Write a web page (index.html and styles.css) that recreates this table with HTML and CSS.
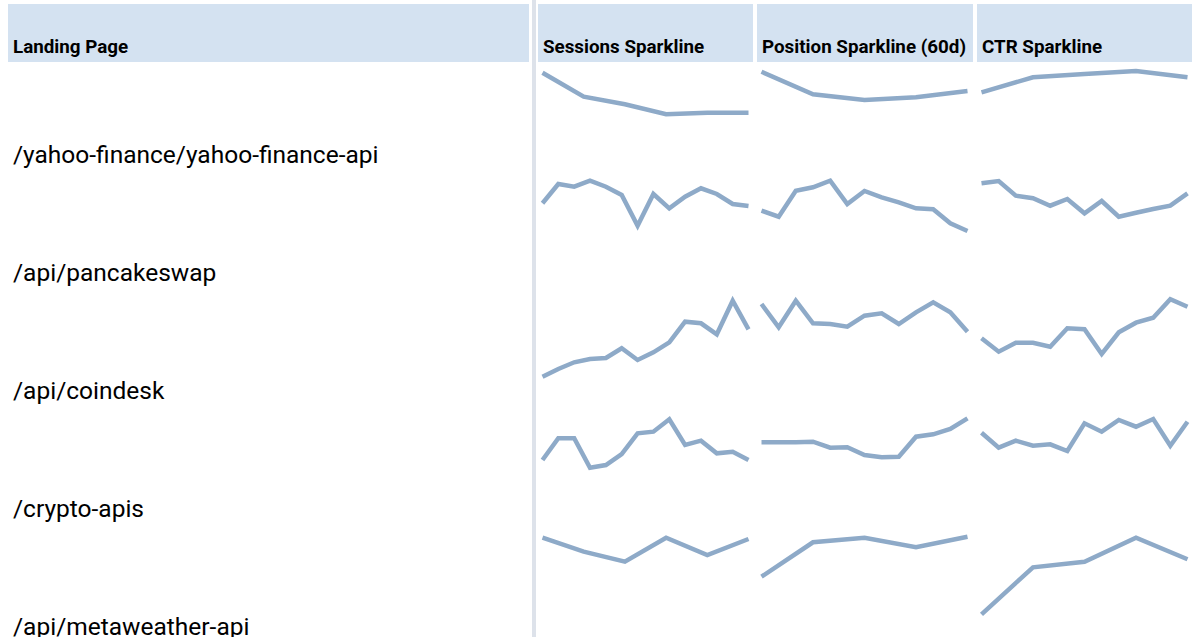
FILE: index.html
```html
<!DOCTYPE html>
<html>
<head>
<meta charset="utf-8">
<link rel="stylesheet" href="styles.css">
</head>
<body>
<div class="page">
  <div class="left">
    <div class="hcell lhead">Landing Page</div>
    <div class="lrow">/yahoo-finance/yahoo-finance-api</div>
    <div class="lrow">/api/pancakeswap</div>
    <div class="lrow">/api/coindesk</div>
    <div class="lrow">/crypto-apis</div>
    <div class="lrow">/api/metaweather-api</div>
  </div>
  <div class="divider"></div>
  <div class="right">
    <div class="hcell">Sessions Sparkline</div>
    <div class="hcell">Position Sparkline (60d)</div>
    <div class="hcell">CTR Sparkline</div>

    <div class="spark"><svg viewBox="0 0 215 118"><polyline points="4.5,10.7 45.7,34.7 86.9,42.3 128.1,52.3 169.3,50.7 210.5,50.7"/></svg></div>
    <div class="spark"><svg viewBox="0 0 215 118"><polyline points="4.5,9.7 56,32.3 107.5,38 159,35.3 210.5,29"/></svg></div>
    <div class="spark"><svg viewBox="0 0 215 118"><polyline points="4.5,30.3 56,15.3 107.5,12 159,9 210.5,15.3"/></svg></div>

    <div class="spark"><svg viewBox="0 0 215 118"><polyline points="4.5,23.3 20.3,4 36.2,6.7 52,0.7 67.9,6.7 83.7,15 99.6,45.7 115.4,14 131.3,28.3 147.1,16.7 163,8.3 178.8,14 194.7,24 210.5,26"/></svg></div>
    <div class="spark"><svg viewBox="0 0 215 118"><polyline points="4.5,30.7 21.7,36.7 38.8,10.7 56,7.3 73.2,0.7 90.3,24 107.5,11 124.7,17.3 141.8,22.3 159,28.3 176.2,29.3 193.3,43.3 210.5,51"/></svg></div>
    <div class="spark"><svg viewBox="0 0 215 118"><polyline points="4.5,3.3 21.7,1 38.8,15.7 56,18.3 73.2,25.7 90.3,19 107.5,33.3 124.7,21 141.8,36.7 159,32.7 176.2,29 193.3,25.7 210.5,13.3"/></svg></div>

    <div class="spark"><svg viewBox="0 0 215 118"><polyline points="4.5,78.7 20.3,71 36.2,64.3 52,61 67.9,60 83.7,50.3 99.6,62 115.4,54.3 131.3,44.3 147.1,23.7 163,25.3 178.8,36.3 194.7,2.7 210.5,31.3"/></svg></div>
    <div class="spark"><svg viewBox="0 0 215 118"><polyline points="4.5,6 21.7,29.3 38.8,2.7 56,25.3 73.2,26 90.3,28.7 107.5,17.7 124.7,15.3 141.8,26 159,14.3 176.2,4.3 193.3,14.3 210.5,33.7"/></svg></div>
    <div class="spark"><svg viewBox="0 0 215 118"><polyline points="4.5,40.3 21.7,53.7 38.8,44.7 56,44.7 73.2,48.7 90.3,30.3 107.5,31.3 124.7,56 141.8,34.3 159,24.7 176.2,19.7 193.3,1.3 210.5,8.7"/></svg></div>

    <div class="spark"><svg viewBox="0 0 215 118"><polyline points="4.5,44 20.3,22.3 36.2,22.3 52,51.7 67.9,49 83.7,38 99.6,17.3 115.4,15.7 131.3,3.3 147.1,29 163,24.7 178.8,37.3 194.7,35.7 210.5,44"/></svg></div>
    <div class="spark"><svg viewBox="0 0 215 118"><polyline points="4.5,26.3 21.7,26.3 38.8,26.3 56,25.7 73.2,31.7 90.3,31.3 107.5,39 124.7,41.3 141.8,40.7 159,20.7 176.2,18.3 193.3,13 210.5,2.3"/></svg></div>
    <div class="spark"><svg viewBox="0 0 215 118"><polyline points="4.5,16.7 21.7,31.7 38.8,24.7 56,29.7 73.2,28.3 90.3,35 107.5,7.3 124.7,15.7 141.8,4 159,10.7 176.2,3 193.3,29.7 210.5,5.7"/></svg></div>

    <div class="spark"><svg viewBox="0 0 215 118"><polyline points="4.5,3.7 45.7,17.7 86.9,27.7 128.1,3.7 169.3,21 210.5,5"/></svg></div>
    <div class="spark"><svg viewBox="0 0 215 118"><polyline points="4.5,42.7 56,8.3 107.5,3.7 159,13.3 210.5,2.7"/></svg></div>
    <div class="spark"><svg viewBox="0 0 215 118"><polyline points="4.5,80.3 56,33.3 107.5,27.7 159,3.7 210.5,25.3"/></svg></div>
  </div>
</div>
</body>
</html>
```

FILE: styles.css
```css
html, body {
  margin: 0;
  padding: 0;
  background: #ffffff;
}

.page {
  display: flex;
  height: 637px;
  overflow: hidden;
  font-family: Roboto, "Liberation Sans", sans-serif;
  color: #000;
}

.left {
  margin-left: 8px;
  width: 521px;
  padding-top: 4px;
  flex: none;
}

.hcell {
  height: 58px;
  box-sizing: border-box;
  background: #d4e2f1;
  display: flex;
  align-items: flex-end;
  padding: 0 0 4px 5px;
  font-size: 18.8px;
  font-weight: 700;
  white-space: nowrap;
}

.lrow {
  height: 118px;
  box-sizing: border-box;
  padding: 79px 0 0 5px;
  font-size: 24.5px;
  line-height: 28px;
  white-space: nowrap;
}

.divider {
  flex: none;
  width: 4px;
  margin-left: 3px;
  background: #dde2ea;
}

.right {
  flex: none;
  margin-left: 2px;
  padding-top: 4px;
  display: grid;
  grid-template-columns: 215px 216px 215px;
  grid-template-rows: 58px;
  grid-auto-rows: 118px;
  column-gap: 4px;
  align-content: start;
}

.spark svg {
  display: block;
  width: 215px;
  height: 118px;
  overflow: visible;
}

.spark polyline {
  fill: none;
  stroke: #8eaac8;
  stroke-width: 4.5;
  stroke-linejoin: miter;
  stroke-linecap: butt;
}
```
